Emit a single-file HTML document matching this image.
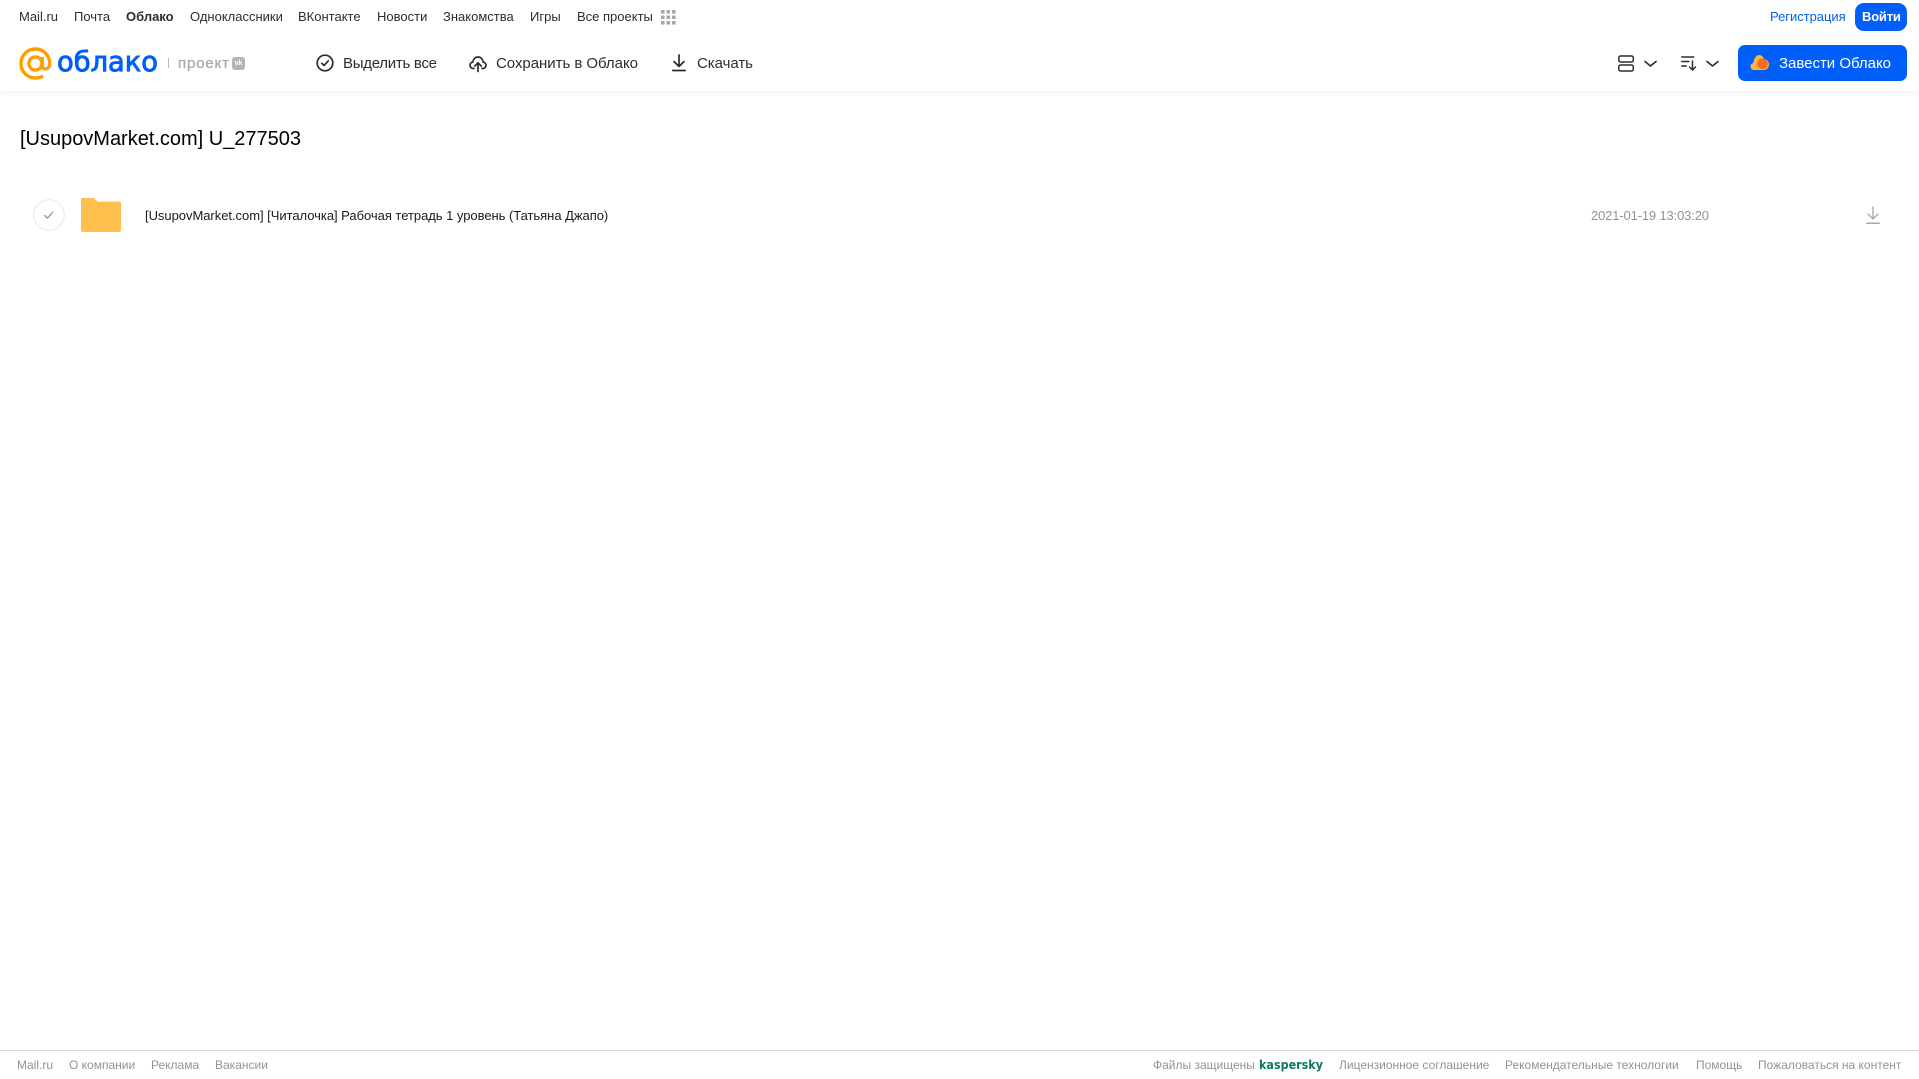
<!DOCTYPE html>
<html lang="ru">
<head>
<meta charset="utf-8">
<title>Облако</title>
<style>
html,body{margin:0;padding:0;background:#fff}
body{position:relative;width:1919px;height:1079px;overflow:hidden;font-family:"Liberation Sans","Noto Sans CJK SC",sans-serif}
.t{position:absolute;white-space:nowrap;line-height:16px}
.n{top:9px;font-size:13px;color:#2c2d2e}
.f{top:1057px;font-size:12px;color:#919399}
svg{position:absolute;overflow:visible}
svg text{font-family:"Liberation Sans",sans-serif}
#hdr{position:absolute;left:0;top:0;width:1919px;height:91px;background:#fff;box-shadow:0 1px 6px rgba(0,0,0,.07)}
#ftr{position:absolute;left:0;top:1050px;width:1919px;height:1px;background:#d8d8d8}
.btn{position:absolute;background:#005ff9}
</style>
</head>
<body>
<div id="hdr"></div>
<span class="t n" style="left:19px">Mail.ru</span>
<span class="t n" style="left:74px">Почта</span>
<span class="t n" style="left:126px;font-weight:bold">Облако</span>
<span class="t n" style="left:190px">Одноклассники</span>
<span class="t n" style="left:298px">ВКонтакте</span>
<span class="t n" style="left:377px">Новости</span>
<span class="t n" style="left:443px">Знакомства</span>
<span class="t n" style="left:530px">Игры</span>
<span class="t n" style="left:577px">Все проекты</span>
<svg style="left:661px;top:10px" width="15" height="15" fill="#a5a7ab"><rect x="0" y="0" width="3.6" height="3.6" rx=".8"/><rect x="5.5" y="0" width="3.6" height="3.6" rx=".8"/><rect x="11" y="0" width="3.6" height="3.6" rx=".8"/><rect x="0" y="5.5" width="3.6" height="3.6" rx=".8"/><rect x="5.5" y="5.5" width="3.6" height="3.6" rx=".8"/><rect x="11" y="5.5" width="3.6" height="3.6" rx=".8"/><rect x="0" y="11" width="3.6" height="3.6" rx=".8"/><rect x="5.5" y="11" width="3.6" height="3.6" rx=".8"/><rect x="11" y="11" width="3.6" height="3.6" rx=".8"/></svg>
<span class="t n" style="left:1770px;color:#005ff9;letter-spacing:-.03px">Регистрация</span>
<div class="btn" style="left:1855px;top:3px;width:52px;height:28px;border-radius:9px"></div>
<span class="t n" style="left:1862px;color:#fff;font-weight:bold;letter-spacing:-.2px">Войти</span>

<svg style="left:19px;top:47px" width="33" height="33" viewBox="0 0 33 33" fill="none" stroke="#ff9e00" stroke-width="3.4"><circle cx="16.5" cy="16.5" r="6.6"/><path d="M23.1 10v8.2c0 5.2 7.6 5.2 7.6-1.7C30.700 8.200 24.300 2 16.500 2 8.400 2 2 8.400 2 16.500S8.400 31 16.500 31c3 0 5.300-.7 7.500-2"/></svg>
<svg style="left:57px;top:42px" width="104" height="40"><text x="0" y="29" style="font-family:'DejaVu Sans',sans-serif" font-size="28" fill="#005ff9" stroke="#005ff9" stroke-width=".9" textLength="101" lengthAdjust="spacingAndGlyphs">облако</text></svg>
<div style="position:absolute;left:168px;top:58px;width:1px;height:10px;background:#b5b7bb"></div>
<svg style="left:178px;top:50px" width="54" height="24"><text x="0" y="18" font-size="15" fill="#a9abaf" stroke="#a9abaf" stroke-width=".35" textLength="51" lengthAdjust="spacing">проект</text></svg>
<div style="position:absolute;left:232px;top:57px;width:13px;height:13px;border-radius:3px;background:#b3b5b9;color:#fff;font:bold 7px/13px 'Liberation Sans',sans-serif;text-align:center">vk</div>

<svg style="left:316px;top:54px" width="18" height="18" fill="none" stroke="#2c2d2e" stroke-width="1.700"><circle cx="9" cy="9" r="7.800"/><path d="M5.700 9.300l2.300 2.200 4.200-4.600" stroke-linecap="round" stroke-linejoin="round"/></svg>
<svg style="left:343px;top:50px" width="96" height="24"><text x="0" y="18" font-size="15" fill="#2c2d2e" textLength="94" lengthAdjust="spacing">Выделить все</text></svg>
<svg style="left:469px;top:54px" width="18" height="18" fill="none" stroke="#2c2d2e" stroke-width="1.700" stroke-linecap="round" stroke-linejoin="round"><path d="M5 14.500H4.200C2.300 14.500 1 13 1 11.300c0-1.700 1.200-3 2.800-3.200C4.200 5 6.400 3 9 3s4.800 2 5.200 5.100c1.600.2 2.800 1.500 2.800 3.200 0 1.700-1.300 3.200-3.200 3.200H13"/><path d="M9 17.500V9M5.800 12L9 8.800 12.200 12"/></svg>
<svg style="left:496px;top:50px" width="144" height="24"><text x="0" y="18" font-size="15" fill="#2c2d2e" textLength="142" lengthAdjust="spacing">Сохранить в Облако</text></svg>
<svg style="left:672px;top:54px" width="14" height="18" fill="none" stroke="#2c2d2e" stroke-width="1.700" stroke-linecap="round" stroke-linejoin="round"><path d="M7 1v11M2 7.500L7 12.500l5-5"/><path d="M.8 16.500h12.400"/></svg>
<svg style="left:697px;top:50px" width="58" height="24"><text x="0" y="18" font-size="15" fill="#2c2d2e" textLength="56" lengthAdjust="spacing">Скачать</text></svg>

<svg style="left:1618px;top:55px" width="17" height="17" fill="none" stroke="#2c2d2e" stroke-width="1.500"><rect x=".8" y="1" width="14.500" height="6" rx="1.800"/><rect x=".8" y="10" width="14.500" height="6" rx="1.800"/></svg>
<svg style="left:1644px;top:60px" width="13" height="8" fill="none" stroke="#2c2d2e" stroke-width="1.700" stroke-linecap="round" stroke-linejoin="round"><path d="M1 1.500l5.500 4.500L12 1.500"/></svg>
<svg style="left:1681px;top:55px" width="17" height="17" fill="none" stroke="#2c2d2e" stroke-width="1.500" stroke-linecap="round" stroke-linejoin="round"><path d="M.8 2h12M.8 6.500h7M.8 11h4.500"/><path d="M11.500 6v9M8.500 12l3 3 3-3"/></svg>
<svg style="left:1706px;top:60px" width="13" height="8" fill="none" stroke="#2c2d2e" stroke-width="1.700" stroke-linecap="round" stroke-linejoin="round"><path d="M1 1.500l5.500 4.500L12 1.500"/></svg>
<div class="btn" style="left:1738px;top:45px;width:169px;height:36px;border-radius:7px"></div>
<svg style="left:1750px;top:54px" width="20" height="17"><path d="M4 16C1.800 16 .5 14.300.5 12.500.5 10.700 1.700 9.300 3.400 9 3.700 4.500 6.200 1 9 1c2.500 0 4.200 1.500 5 4 2.800.2 5 2.500 5 5.500 0 3-2.300 5.500-5 5.500z" fill="#ffb238"/><circle cx="12.500" cy="9.800" r="5.300" fill="#f26c21"/></svg>
<svg style="left:1779px;top:50px" width="114" height="24"><text x="0" y="18" font-size="15" fill="#fff" textLength="112" lengthAdjust="spacing">Завести Облако</text></svg>

<span class="t" style="left:20px;top:127px;font-size:20px;line-height:24px;color:#000;letter-spacing:-.01px">[UsupovMarket.com] U_277503</span>
<svg style="left:33px;top:199px" width="32" height="32" fill="none"><circle cx="16" cy="16" r="15.300" stroke="#ececec" stroke-width="1.200"/><path d="M11.500 16.500l3 2.700 5.200-6" stroke="#999" stroke-width="1.400" stroke-linecap="round" stroke-linejoin="round"/></svg>
<svg style="left:81px;top:198px" width="40" height="34"><path d="M2 0h9.500c1.500 0 2.300.7 3 1.500L16.500 3.500H38c1.200 0 2 .8 2 2V32c0 1.200-.8 2-2 2H2c-1.200 0-2-.8-2-2V2C0 .8.800 0 2 0z" fill="#ffc04d"/><path d="M0 7h40" stroke="#ffb338" stroke-width="1" opacity=".6"/></svg>
<span class="t" style="left:145px;top:208px;font-size:13px;color:#1a1a1a;letter-spacing:-.035px">[UsupovMarket.com] [Читалочка] Рабочая тетрадь 1 уровень (Татьяна Джапо)</span>
<span class="t" style="left:1591px;top:208px;font-size:13px;color:#919399;letter-spacing:-.15px">2021-01-19 13:03:20</span>
<svg style="left:1866px;top:206px" width="14" height="19" fill="none" stroke="#a5a7ab" stroke-width="1.300" stroke-linecap="round" stroke-linejoin="round"><path d="M7 1v12M2 8l5 5 5-5"/><path d="M.8 17.300h12.400" stroke-width="1.500"/></svg>

<div id="ftr"></div>
<span class="t f" style="left:17px">Mail.ru</span>
<span class="t f" style="left:69px">О компании</span>
<span class="t f" style="left:151px">Реклама</span>
<span class="t f" style="left:215px">Вакансии</span>
<span class="t f" style="left:1153px">Файлы защищены</span>
<svg style="left:1259px;top:1053px" width="66" height="22"><text x="0" y="16" style="font-family:'DejaVu Sans',sans-serif" font-size="12" font-weight="bold" fill="#0a7a66" textLength="64" lengthAdjust="spacingAndGlyphs">kaspersky</text></svg>
<span class="t f" style="left:1339px">Лицензионное соглашение</span>
<span class="t f" style="left:1505px">Рекомендательные технологии</span>
<span class="t f" style="left:1696px">Помощь</span>
<span class="t f" style="left:1758px">Пожаловаться на контент</span>
</body>
</html>
